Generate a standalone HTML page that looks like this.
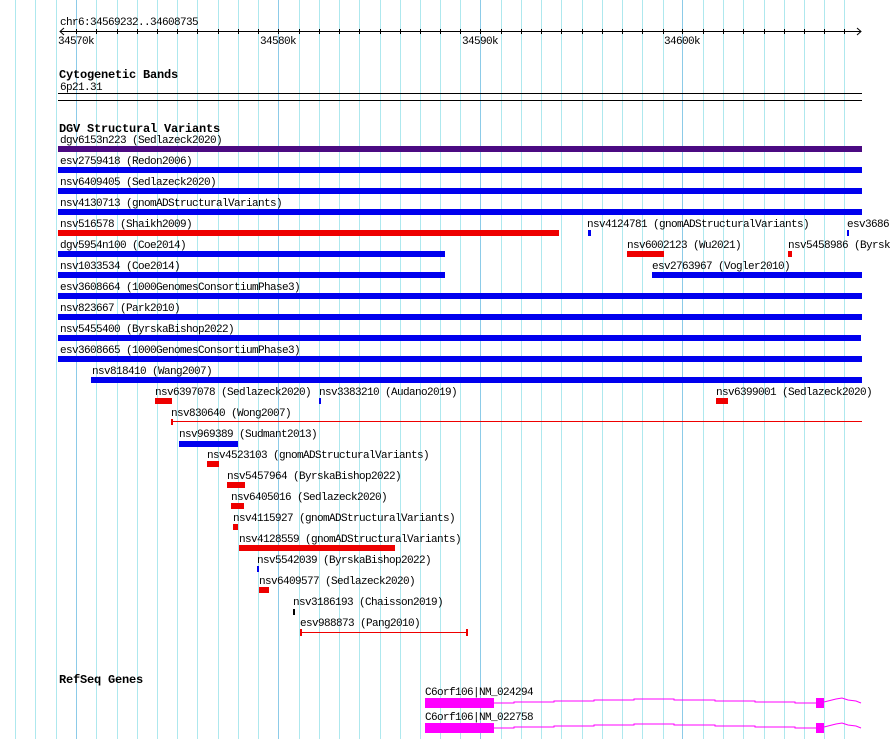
<!DOCTYPE html>
<html><head><meta charset="utf-8"><style>
html,body{margin:0;padding:0;background:#fff;width:890px;height:739px;overflow:hidden}
svg{display:block}
text{font-family:"Liberation Mono",monospace;font-size:11px;letter-spacing:-0.6px;fill:#000}
text:not(.b){transform:translateY(-2px)}
.b{font-weight:bold;font-size:12px;letter-spacing:-0.2px}
</style></head><body>
<svg width="890" height="739" viewBox="0 0 890 739" xmlns="http://www.w3.org/2000/svg">
<g stroke="#aee8ee" stroke-width="1">
<line x1="15.5" y1="0" x2="15.5" y2="739"/><line x1="35.5" y1="0" x2="35.5" y2="739"/><line x1="56.5" y1="0" x2="56.5" y2="739"/>
<line x1="96.5" y1="0" x2="96.5" y2="739"/><line x1="117.5" y1="0" x2="117.5" y2="739"/><line x1="137.5" y1="0" x2="137.5" y2="739"/><line x1="157.5" y1="0" x2="157.5" y2="739"/><line x1="177.5" y1="0" x2="177.5" y2="739"/><line x1="197.5" y1="0" x2="197.5" y2="739"/><line x1="218.5" y1="0" x2="218.5" y2="739"/><line x1="238.5" y1="0" x2="238.5" y2="739"/><line x1="258.5" y1="0" x2="258.5" y2="739"/>
<line x1="299.5" y1="0" x2="299.5" y2="739"/><line x1="319.5" y1="0" x2="319.5" y2="739"/><line x1="339.5" y1="0" x2="339.5" y2="739"/><line x1="359.5" y1="0" x2="359.5" y2="739"/><line x1="380.5" y1="0" x2="380.5" y2="739"/><line x1="400.5" y1="0" x2="400.5" y2="739"/><line x1="420.5" y1="0" x2="420.5" y2="739"/><line x1="440.5" y1="0" x2="440.5" y2="739"/><line x1="460.5" y1="0" x2="460.5" y2="739"/>
<line x1="501.5" y1="0" x2="501.5" y2="739"/><line x1="521.5" y1="0" x2="521.5" y2="739"/><line x1="541.5" y1="0" x2="541.5" y2="739"/><line x1="561.5" y1="0" x2="561.5" y2="739"/><line x1="582.5" y1="0" x2="582.5" y2="739"/><line x1="602.5" y1="0" x2="602.5" y2="739"/><line x1="622.5" y1="0" x2="622.5" y2="739"/><line x1="642.5" y1="0" x2="642.5" y2="739"/><line x1="663.5" y1="0" x2="663.5" y2="739"/>
<line x1="703.5" y1="0" x2="703.5" y2="739"/><line x1="723.5" y1="0" x2="723.5" y2="739"/><line x1="743.5" y1="0" x2="743.5" y2="739"/><line x1="764.5" y1="0" x2="764.5" y2="739"/><line x1="784.5" y1="0" x2="784.5" y2="739"/><line x1="804.5" y1="0" x2="804.5" y2="739"/><line x1="824.5" y1="0" x2="824.5" y2="739"/><line x1="844.5" y1="0" x2="844.5" y2="739"/>
</g>
<g stroke="#8ccbe8" stroke-width="1">
<line x1="76.5" y1="0" x2="76.5" y2="739"/><line x1="278.5" y1="0" x2="278.5" y2="739"/><line x1="480.5" y1="0" x2="480.5" y2="739"/><line x1="682.5" y1="0" x2="682.5" y2="739"/>
</g>
<text x="60" y="27">chr6:34569232..34608735</text>
<g stroke="#000" stroke-width="1">
<line x1="60" y1="31.5" x2="861" y2="31.5"/>
<polyline points="64,28 60,31.5 64,35" fill="none"/>
<polyline points="857,28 861,31.5 857,35" fill="none"/>
<path d="M76.5 29v5M96.5 29v5M117.5 29v5M137.5 29v5M157.5 29v5M177.5 29v5M197.5 29v5M218.5 29v5M238.5 29v5M258.5 29v5M278.5 29v5M299.5 29v5M319.5 29v5M339.5 29v5M359.5 29v5M380.5 29v5M400.5 29v5M420.5 29v5M440.5 29v5M460.5 29v5M480.5 29v5M501.5 29v5M521.5 29v5M541.5 29v5M561.5 29v5M582.5 29v5M602.5 29v5M622.5 29v5M642.5 29v5M663.5 29v5M682.5 29v5M703.5 29v5M723.5 29v5M743.5 29v5M764.5 29v5M784.5 29v5M804.5 29v5M824.5 29v5M844.5 29v5"/>
</g>
<text x="58" y="46">34570k</text><text x="260" y="46">34580k</text><text x="462" y="46">34590k</text><text x="664" y="46">34600k</text>
<text class="b" x="59" y="78">Cytogenetic Bands</text>
<text x="60" y="92">6p21.31</text>
<rect x="58" y="93" width="804" height="1" fill="#000"/>
<rect x="58" y="100" width="804" height="1" fill="#000"/>
<text class="b" x="59" y="132">DGV Structural Variants</text>
<text x="60" y="145">dgv6153n223 (Sedlazeck2020)</text><rect x="58" y="146" width="804" height="6" fill="#4b0a82"/>
<text x="60" y="166">esv2759418 (Redon2006)</text><rect x="58" y="167" width="804" height="6" fill="#0000ee"/>
<text x="60" y="187">nsv6409405 (Sedlazeck2020)</text><rect x="58" y="188" width="804" height="6" fill="#0000ee"/>
<text x="60" y="208">nsv4130713 (gnomADStructuralVariants)</text><rect x="58" y="209" width="804" height="6" fill="#0000ee"/>
<text x="60" y="229">nsv516578 (Shaikh2009)</text><rect x="58" y="230" width="501" height="6" fill="#ee0000"/>
<text x="587" y="229">nsv4124781 (gnomADStructuralVariants)</text><rect x="588" y="230" width="3" height="6" fill="#0000ee"/>
<text x="847" y="229">esv3686</text><rect x="847" y="230" width="2" height="6" fill="#0000ee"/>
<text x="60" y="250">dgv5954n100 (Coe2014)</text><rect x="58" y="251" width="387" height="6" fill="#0000ee"/>
<text x="627" y="250">nsv6002123 (Wu2021)</text><rect x="627" y="251" width="37" height="6" fill="#ee0000"/>
<text x="788" y="250">nsv5458986 (Byrsk</text><rect x="788" y="251" width="4" height="6" fill="#ee0000"/>
<text x="60" y="271">nsv1033534 (Coe2014)</text><rect x="58" y="272" width="387" height="6" fill="#0000ee"/>
<text x="652" y="271">esv2763967 (Vogler2010)</text><rect x="652" y="272" width="210" height="6" fill="#0000ee"/>
<text x="60" y="292">esv3608664 (1000GenomesConsortiumPhase3)</text><rect x="58" y="293" width="804" height="6" fill="#0000ee"/>
<text x="60" y="313">nsv823667 (Park2010)</text><rect x="58" y="314" width="804" height="6" fill="#0000ee"/>
<text x="60" y="334">nsv5455400 (ByrskaBishop2022)</text><rect x="58" y="335" width="803" height="6" fill="#0000ee"/>
<text x="60" y="355">esv3608665 (1000GenomesConsortiumPhase3)</text><rect x="58" y="356" width="804" height="6" fill="#0000ee"/>
<text x="92" y="376">nsv818410 (Wang2007)</text><rect x="91" y="377" width="771" height="6" fill="#0000ee"/>
<text x="155" y="397">nsv6397078 (Sedlazeck2020)</text><rect x="155" y="398" width="17" height="6" fill="#ee0000"/>
<text x="319" y="397">nsv3383210 (Audano2019)</text><rect x="319" y="398" width="2" height="6" fill="#0000ee"/>
<text x="716" y="397">nsv6399001 (Sedlazeck2020)</text><rect x="716" y="398" width="12" height="6" fill="#ee0000"/>
<text x="171" y="418">nsv830640 (Wong2007)</text><rect x="171" y="421" width="691" height="1" fill="#ee0000"/><rect x="171" y="419" width="2" height="6" fill="#ee0000"/>
<text x="179" y="439">nsv969389 (Sudmant2013)</text><rect x="179" y="441" width="59" height="6" fill="#0000ee"/>
<text x="207" y="460">nsv4523103 (gnomADStructuralVariants)</text><rect x="207" y="461" width="12" height="6" fill="#ee0000"/>
<text x="227" y="481">nsv5457964 (ByrskaBishop2022)</text><rect x="227" y="482" width="18" height="6" fill="#ee0000"/>
<text x="231" y="502">nsv6405016 (Sedlazeck2020)</text><rect x="231" y="503" width="13" height="6" fill="#ee0000"/>
<text x="233" y="523">nsv4115927 (gnomADStructuralVariants)</text><rect x="233" y="524" width="5" height="6" fill="#ee0000"/>
<text x="239" y="544">nsv4128559 (gnomADStructuralVariants)</text><rect x="239" y="545" width="156" height="6" fill="#ee0000"/>
<text x="257" y="565">nsv5542039 (ByrskaBishop2022)</text><rect x="257" y="566" width="2" height="6" fill="#0000ee"/>
<text x="259" y="586">nsv6409577 (Sedlazeck2020)</text><rect x="259" y="587" width="10" height="6" fill="#ee0000"/>
<text x="293" y="607">nsv3186193 (Chaisson2019)</text><rect x="293" y="609" width="2" height="6" fill="#000"/>
<text x="300" y="628">esv988873 (Pang2010)</text><rect x="300" y="632" width="168" height="1" fill="#ee0000"/><rect x="300" y="629" width="2" height="7" fill="#ee0000"/><rect x="466" y="629" width="2" height="7" fill="#ee0000"/>
<text class="b" x="59" y="683">RefSeq Genes</text>
<g fill="#ff00ff">
<text x="425" y="697" style="fill:#000">C6orf106|NM_024294</text>
<rect x="425" y="698" width="69" height="10"/><rect x="816" y="698" width="8" height="10"/>
<polyline fill="none" stroke="#ff00ff" points="494,703 514,703 514,702 554,702 554,701 594,701 594,700 634,700 634,699 674,699 674,700 715,700 715,701 755,701 755,702 795,702 795,703 816,703"/>
<polyline fill="none" stroke="#ff00ff" points="824,702 836,699 842,698 848,700 856,701 861,703"/>
<text x="425" y="722" style="fill:#000">C6orf106|NM_022758</text>
<rect x="425" y="723" width="69" height="10"/><rect x="816" y="723" width="8" height="10"/>
<polyline fill="none" stroke="#ff00ff" points="494,728 514,728 514,727 554,727 554,726 594,726 594,725 634,725 634,724 674,724 674,725 715,725 715,726 755,726 755,727 795,727 795,728 816,728"/>
<polyline fill="none" stroke="#ff00ff" points="824,727 836,724 842,723 848,725 856,726 861,728"/>
</g>
</svg>
</body></html>
